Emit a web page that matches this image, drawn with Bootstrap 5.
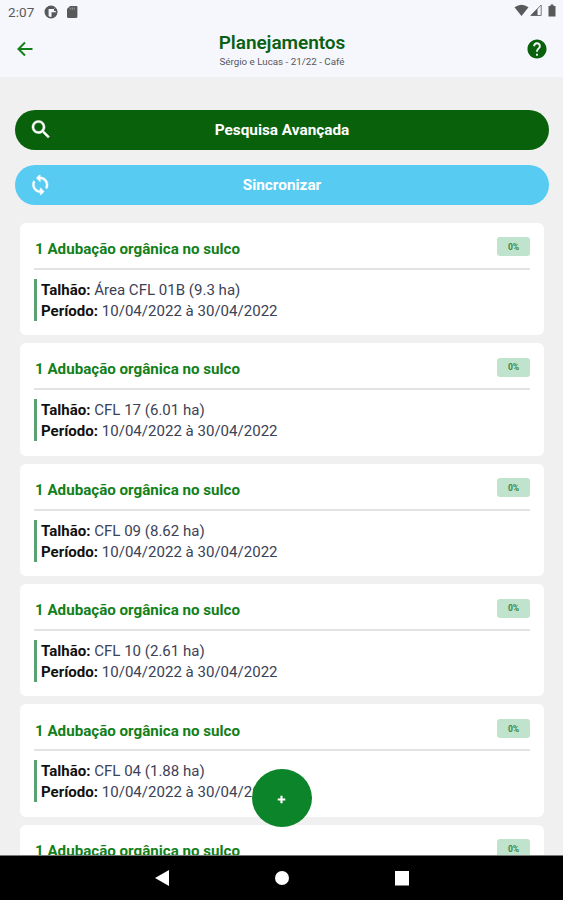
<!DOCTYPE html>
<html lang="pt-BR">
<head>
<meta charset="utf-8">
<meta name="viewport" content="width=device-width, initial-scale=1">
<title>Planejamentos</title>
<link href="https://cdn.jsdelivr.net/npm/bootstrap@5.3.0/dist/css/bootstrap.min.css" rel="stylesheet">
<style>
  body { font-family: Roboto, "Liberation Sans", sans-serif; background: #f0f0f0; color: #3c4257; }
  svg { display: block; }
  .app { height: 900px; }
  .top-area { background: #f5f7fc; height: 77px; }
  .status-bar { height: 24px; padding: 0 7px 0 8px; color: #58595b; font-size: 13.5px; }
  .status-time { width: 36px; letter-spacing: .1px; }
  .wifi { margin-right: 1px; }
  .signal { margin-right: 6px; }
  .app-bar { height: 50px; padding: 0 16px 0 16px; }
  .titles { padding: 2px 0 0 3px; }
  .screen-title { font-size: 19px; line-height: 22px; font-weight: 600; color: #0b6113; letter-spacing: -.05px; }
  .screen-sub { font-size: 9.8px; line-height: 13px; padding-top: 1px; color: #55575e; }
  .content { padding: 32.500px 14px 0 15px; }
  .action { --bs-btn-color: #fff; height: 40px; font-size: 15.35px; font-weight: 700; padding: 0 15px; }
  .action-search { background: #0a610b; }
  .action-sync { background: #57cbf2; }
  .action svg { width: 20px; height: 20px; }
  .action span { padding: 3px 20px 0 0; }
  .stack { gap: 15px; }
  .plans { padding: 0 5px; margin-top: 18.4px; gap: 8px; }
  .plan { height: 112.4px; border-radius: 6px; padding: 0 14px; }
  .plan-head { height: 47px; border-bottom: 2px solid #e2e3e4; padding-top: 6px; }
  .plan-title { font-size: 15.15px; font-weight: 700; color: #128019; padding: 2px 0 0 1px; }
  .pct { width: 33px; height: 19px; border-radius: 3px; background: #bfe3cc; color: #2c8a4b; font-size: 8.5px; font-weight: 700; margin-top: -3px; padding-top: 1px; }
  .plan-body { margin-top: 9px; border-left: 3px solid #5ba272; padding: 1px 0 0 4px; font-size: 15.05px; line-height: 21px; height: 42px; }
  .plan-body b { color: #111; }
  .fab { width: 60px; height: 58px; left: 252px; top: 769px; background: #0c8429; }
  .fab svg { margin: 3px 1px 0 0; }
  .nav-bar { height: 45px; background: #000; border-top: 1px solid #777; }
</style>
</head>
<body>
<div class="app d-flex flex-column overflow-hidden position-relative">
  <header class="top-area flex-shrink-0">
    <div class="status-bar d-flex align-items-center justify-content-between">
      <div class="d-flex align-items-center">
        <span class="status-time">2:07</span>
        <svg width="14" height="14" viewBox="0 0 14 14"><circle cx="7" cy="7" r="5.7" fill="none" stroke="#58595b" stroke-width="1.6"/><path d="M1 7a6 6 0 0 1 3.600-5.400V12.400A6 6 0 0 1 1 7zM7.500 7.300h5.700A6.200 6.200 0 0 1 7.500 13zM10 4h3v2h-3zM4 1.500h6V4H4z" fill="#58595b"/></svg>
        <svg class="ms-2" width="12" height="14" viewBox="0 0 12 14"><path d="M4 1h6.200c.7 0 1.200.5 1.200 1.200v9.600c0 .7-.5 1.200-1.200 1.200H2.200C1.500 13 1 12.500 1 11.800V4z" fill="#58595b"/><path d="M4.300 2.500v2.200M6.300 2.500v2.200M8.300 2.500v2.200" stroke="#a9abaf" stroke-width=".8"/></svg>
      </div>
      <div class="d-flex align-items-center pb-1">
        <svg class="wifi" width="15" height="12" viewBox="0 0 15 12"><path d="M.5 3.200Q7.500-1.800 14.500 3.200L7.500 12z" fill="#58595b"/></svg>
        <svg class="signal" width="12" height="12" viewBox="0 0 12 12"><path d="M.8 11.500L11.200 1v10.500z" fill="none" stroke="#77797c"/><path d="M.8 11.500L7.500 4.500v7z" fill="#58595b"/></svg>
        <svg width="8" height="13" viewBox="0 0 8 13"><path d="M.5 2h2V.5h3V2h2v10.500h-7z" fill="#58595b"/></svg>
      </div>
    </div>
    <div class="app-bar d-flex align-items-center justify-content-between">
      <svg width="18" height="18" viewBox="0 0 18 18" fill="none" stroke="#128019" stroke-width="2"><path d="M16.500 9H3M9 2.500L2.500 9 9 15.500"/></svg>
      <div class="titles text-center">
        <div class="screen-title">Planejamentos</div>
        <div class="screen-sub">Sérgio e Lucas - 21/22 - Café</div>
      </div>
      <svg width="20" height="20" viewBox="1.500 1.500 21 21"><path fill="#0a610b" d="M12 2C6.480 2 2 6.480 2 12s4.480 10 10 10 10-4.480 10-10S17.520 2 12 2zm1 17h-2v-2h2v2zm2.070-7.750-.9.920C13.450 12.900 13 13.500 13 15h-2v-.5c0-1.100.45-2.100 1.170-2.830l1.240-1.260c.37-.36.590-.86.590-1.410 0-1.100-.9-2-2-2s-2 .9-2 2H8c0-2.210 1.790-4 4-4s4 1.790 4 4c0 .88-.36 1.680-.93 2.250z"/></svg>
    </div>
  </header>

  <main class="content flex-grow-1 overflow-hidden">
    <div class="stack d-flex flex-column">
      <button class="action action-search btn border-0 rounded-pill d-flex align-items-center">
        <svg viewBox="1 2.500 20 20" fill="#fff" stroke="#fff" stroke-width=".5"><path d="M15.500 14h-.79l-.28-.27C15.410 12.590 16 11.110 16 9.500 16 5.910 13.090 3 9.500 3S3 5.910 3 9.500 5.910 16 9.500 16c1.610 0 3.090-.59 4.230-1.570l.27.28v.79l5 4.990L20.490 19l-4.990-5zm-6 0C7.010 14 5 11.990 5 9.500S7.010 5 9.500 5 14 7.010 14 9.500 11.990 14 9.500 14z"/></svg>
        <span class="flex-grow-1">Pesquisa Avançada</span>
      </button>
      <button class="action action-sync btn border-0 rounded-pill d-flex align-items-center">
        <svg viewBox="1.500 2 20.500 20.500" fill="#fff" stroke="#fff" stroke-width=".5"><path d="M12 4V1L8 5l4 4V6c3.310 0 6 2.690 6 6 0 1.010-.25 1.970-.7 2.800l1.460 1.460C19.540 15.030 20 13.570 20 12c0-4.420-3.580-8-8-8zm0 14c-3.310 0-6-2.690-6-6 0-1.010.25-1.970.7-2.800L5.240 7.740C4.460 8.970 4 10.430 4 12c0 4.420 3.580 8 8 8v3l4-4-4-4v3z"/></svg>
        <span class="flex-grow-1">Sincronizar</span>
      </button>
    </div>

    <div class="plans d-flex flex-column">
      <article class="plan bg-white flex-shrink-0">
        <div class="plan-head d-flex align-items-center justify-content-between"><span class="plan-title">1 Adubação orgânica no sulco</span><span class="pct d-flex align-items-center justify-content-center">0%</span></div>
        <div class="plan-body"><div><b>Talhão:</b> Área CFL 01B (9.3 ha)</div><div><b>Período:</b> 10/04/2022 à 30/04/2022</div></div>
      </article>
      <article class="plan bg-white flex-shrink-0">
        <div class="plan-head d-flex align-items-center justify-content-between"><span class="plan-title">1 Adubação orgânica no sulco</span><span class="pct d-flex align-items-center justify-content-center">0%</span></div>
        <div class="plan-body"><div><b>Talhão:</b> CFL 17 (6.01 ha)</div><div><b>Período:</b> 10/04/2022 à 30/04/2022</div></div>
      </article>
      <article class="plan bg-white flex-shrink-0">
        <div class="plan-head d-flex align-items-center justify-content-between"><span class="plan-title">1 Adubação orgânica no sulco</span><span class="pct d-flex align-items-center justify-content-center">0%</span></div>
        <div class="plan-body"><div><b>Talhão:</b> CFL 09 (8.62 ha)</div><div><b>Período:</b> 10/04/2022 à 30/04/2022</div></div>
      </article>
      <article class="plan bg-white flex-shrink-0">
        <div class="plan-head d-flex align-items-center justify-content-between"><span class="plan-title">1 Adubação orgânica no sulco</span><span class="pct d-flex align-items-center justify-content-center">0%</span></div>
        <div class="plan-body"><div><b>Talhão:</b> CFL 10 (2.61 ha)</div><div><b>Período:</b> 10/04/2022 à 30/04/2022</div></div>
      </article>
      <article class="plan bg-white flex-shrink-0">
        <div class="plan-head d-flex align-items-center justify-content-between"><span class="plan-title">1 Adubação orgânica no sulco</span><span class="pct d-flex align-items-center justify-content-center">0%</span></div>
        <div class="plan-body"><div><b>Talhão:</b> CFL 04 (1.88 ha)</div><div><b>Período:</b> 10/04/2022 à 30/04/2022</div></div>
      </article>
      <article class="plan bg-white flex-shrink-0">
        <div class="plan-head d-flex align-items-center justify-content-between"><span class="plan-title">1 Adubação orgânica no sulco</span><span class="pct d-flex align-items-center justify-content-center">0%</span></div>
      </article>
    </div>
  </main>

  <button class="fab btn border-0 p-0 rounded-circle position-absolute d-flex align-items-center justify-content-center" aria-label="Adicionar">
    <svg width="9" height="9" viewBox="0 0 10 10" stroke="#fff" stroke-width="2.400"><path d="M5 .8v8.400M.8 5h8.400"/></svg>
  </button>

  <nav class="nav-bar flex-shrink-0 d-flex align-items-center justify-content-center">
    <svg width="254" height="18" viewBox="0 0 254 18" fill="#fff"><path d="M0 9L14 1v16z"/><circle cx="127" cy="9" r="7"/><rect x="240" y="2" width="14" height="14.500"/></svg>
  </nav>
</div>
<script src="https://cdn.jsdelivr.net/npm/bootstrap@5.3.0/dist/js/bootstrap.bundle.min.js"></script>
</body>
</html>
